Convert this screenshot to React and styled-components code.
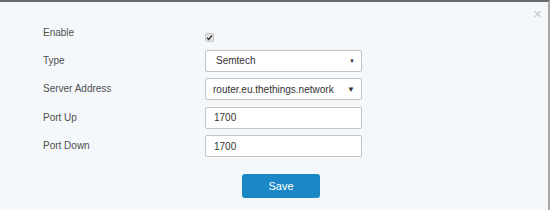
import React, { useState } from "react";
import styled, { createGlobalStyle } from "styled-components";

const GlobalStyle = createGlobalStyle`
  html, body {
    margin: 0;
    padding: 0;
    background: #f4f8fa;
    font-family: "Liberation Sans", Arial, sans-serif;
  }
`;

export default function App() {
    const [enabled, setEnabled] = useState(true);
    const [type, setType] = useState("Semtech");
    const [server, setServer] = useState("router.eu.thethings.network");
    const [portUp, setPortUp] = useState("1700");
    const [portDown, setPortDown] = useState("1700");

    return (
        <>
            <GlobalStyle />
            <Modal>
                <CloseButton aria-label="Close">×</CloseButton>
                <Form onSubmit={(e) => e.preventDefault()}>
                    <Label $top>Enable</Label>
                    <CheckCell>
                        <CheckBox $checked={enabled} onClick={() => setEnabled(!enabled)}>
                            {enabled && (
                                <svg width="7" height="7" viewBox="0 0 7 7">
                                    <path d="M1 3.8 L2.7 5.4 L6 1.4" fill="none" stroke="#333" strokeWidth="1.4" />
                                </svg>
                            )}
                        </CheckBox>
                    </CheckCell>

                    <Label>Type</Label>
                    <SelectWrap>
                        <Select $pad={10} value={type} onChange={(e) => setType(e.target.value)}>
                            <option>Semtech</option>
                        </Select>
                        <Arrow $small>▼</Arrow>
                    </SelectWrap>

                    <Label>Server Address</Label>
                    <SelectWrap>
                        <Select $pad={7} value={server} onChange={(e) => setServer(e.target.value)}>
                            <option>router.eu.thethings.network</option>
                        </Select>
                        <Arrow>▼</Arrow>
                    </SelectWrap>

                    <Label>Port Up</Label>
                    <Input value={portUp} onChange={(e) => setPortUp(e.target.value)} />

                    <Label>Port Down</Label>
                    <Input value={portDown} onChange={(e) => setPortDown(e.target.value)} />

                    <span />
                    <SaveButton type="submit">Save</SaveButton>
                </Form>
            </Modal>
        </>
    );
}

const Modal = styled.div`
    position: relative;
    box-sizing: border-box;
    width: 550px;
    height: 210px;
    background: #f4f8fa;
    border-top: 2px solid #6a6a6a;
    border-right: 2px solid #a8a8a8;
    padding: 23px 0 0 43px;
`;

const CloseButton = styled.button`
    position: absolute;
    top: 3px;
    right: 6px;
    border: none;
    background: none;
    color: #c8cacc;
    font-size: 15px;
    font-family: "Liberation Sans", Arial, sans-serif;
    padding: 0;
    cursor: pointer;
`;

const Form = styled.form`
    display: grid;
    grid-template-columns: 162px 157px;
    grid-template-rows: 18px repeat(4, 22px) 34.5px;
    row-gap: 6.5px;
    align-items: center;
`;

const Label = styled.label`
    font-size: 10px;
    color: #505050;
    line-height: 16px;
    align-self: ${(p) => (p.$top ? "start" : "center")};
`;

const CheckCell = styled.div`
    display: flex;
    align-items: flex-end;
    height: 100%;
    padding-bottom: 1px;
    box-sizing: border-box;
`;

const CheckBox = styled.span`
    display: flex;
    align-items: center;
    justify-content: center;
    width: 9px;
    height: 9px;
    box-sizing: border-box;
    border: 1px solid #c9c9c9;
    border-radius: 2px;
    background: #e4e4e4;
    cursor: pointer;
`;

const SelectWrap = styled.div`
    position: relative;
    height: 22px;
`;

const Select = styled.select`
    appearance: none;
    width: 100%;
    height: 22px;
    box-sizing: border-box;
    border: 1px solid #c3c3c3;
    border-radius: 2px;
    background: #fff;
    color: #333;
    font-size: 10px;
    font-family: "Liberation Sans", Arial, sans-serif;
    padding: 0 18px 0 ${(p) => p.$pad}px;
    outline: none;
`;

const Arrow = styled.span`
    position: absolute;
    right: 7px;
    top: 50%;
    transform: translateY(-50%);
    font-size: ${(p) => (p.$small ? "6px" : "8px")};
    color: #333;
    pointer-events: none;
`;

const Input = styled.input`
    width: 100%;
    height: 22px;
    box-sizing: border-box;
    border: 1px solid #c3c3c3;
    border-radius: 2px;
    background: #fff;
    color: #333;
    font-size: 10px;
    font-family: "Liberation Sans", Arial, sans-serif;
    padding: 0 8px;
    outline: none;
`;

const SaveButton = styled.button`
    justify-self: start;
    align-self: end;
    margin-left: 37px;
    width: 78px;
    height: 24px;
    border: none;
    border-radius: 3px;
    background: #1b87c4;
    color: #fff;
    font-size: 11px;
    font-family: "Liberation Sans", Arial, sans-serif;
    cursor: pointer;
`;
